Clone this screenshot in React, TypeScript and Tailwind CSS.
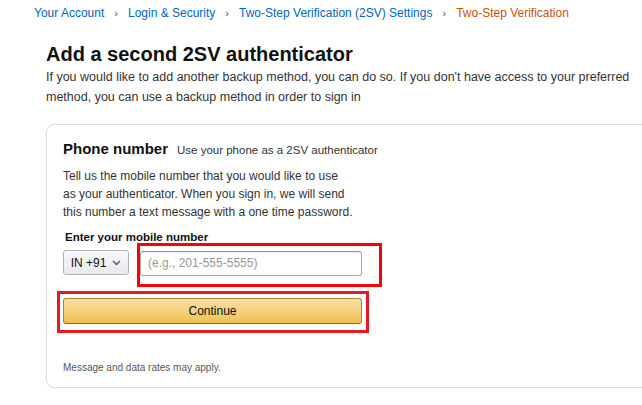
import React, { useState } from 'react';

const crumbs = [
  'Your Account',
  'Login & Security',
  'Two-Step Verification (2SV) Settings',
];

const App: React.FC = () => {
  const [phone, setPhone] = useState('');

  return (
    <div className="w-[642px] h-[405px] overflow-hidden bg-white font-['Liberation_Sans',Arial,sans-serif] text-[#111]">
      {/* breadcrumb */}
      <nav className="flex items-center pl-[34px] pt-[5px] text-[12px] leading-[16px]">
        {crumbs.map((c) => (
          <React.Fragment key={c}>
            <a className="text-[#0066c0] cursor-pointer">{c}</a>
            <span className="mx-[10px] text-[#555] text-[11px]">›</span>
          </React.Fragment>
        ))}
        <span className="text-[#c45500]">Two-Step Verification</span>
      </nav>

      <div className="pl-[46px]">
        <h1 className="mt-[20px] text-[20px] leading-[26px] font-bold">Add a second 2SV authenticator</h1>
        <p className="w-[590px] text-[12.5px] leading-[20px] text-[#333]">
          If you would like to add another backup method, you can do so. If you don't have access to your preferred
          method, you can use a backup method in order to sign in
        </p>

        <div className="mt-[17px] w-[620px] h-[264px] border border-[#ddd] rounded-[8px] pl-[16px] pt-[14px]">
          <div className="flex items-baseline">
            <h2 className="text-[15px] leading-[20px] font-bold">Phone number</h2>
            <span className="ml-[9px] text-[11.5px] text-[#333]">Use your phone as a 2SV authenticator</span>
          </div>

          <p className="mt-[8px] text-[12px] leading-[18px] text-[#333]">
            Tell us the mobile number that you would like to use
            <br />
            as your authenticator. When you sign in, we will send
            <br />
            this number a text message with a one time password.
          </p>

          <label className="block mt-[9px] ml-[2px] text-[11.5px] leading-[14px] font-bold">Enter your mobile number</label>

          <div className="flex mt-[6px]">
            <button className="flex items-center justify-center gap-[6px] w-[66px] h-[25px] rounded-[3px] border border-[#adb1b8] bg-gradient-to-b from-[#f7f8fa] to-[#e7e9ec] text-[12px] text-[#111] shadow-[0_1px_0_rgba(255,255,255,0.6)_inset]">
              IN +91
              <svg width="9" height="6" viewBox="0 0 9 6" fill="none">
                <path d="M1 1l3.5 3.5L8 1" stroke="#555" strokeWidth="1.4" />
              </svg>
            </button>

            <div className="relative ml-[11px]">
              <input
                value={phone}
                onChange={(e) => setPhone(e.target.value)}
                placeholder="(e.g., 201-555-5555)"
                className="w-[222px] h-[25px] px-[7px] rounded-[3px] border border-[#a6a6a6] border-t-[#949494] shadow-[0_1px_0_rgba(0,0,0,0.07)_inset] text-[12px] placeholder:text-[#999] outline-none"
              />
              <div className="absolute left-[-3px] top-[-7px] right-[-20px] bottom-[-11px] border-[3px] border-[#ff0000] pointer-events-none" />
            </div>
          </div>

          <div className="relative mt-[22px] w-[299px]">
            <button className="w-full h-[26px] rounded-[3px] border border-[#a88734] border-b-[#846a29] bg-gradient-to-b from-[#f7dfa5] to-[#f0c14b] text-[12px] text-[#111]">
              Continue
            </button>
            <div className="absolute left-[-6px] top-[-7px] right-[-7px] bottom-[-9px] border-[3px] border-[#e31b23] pointer-events-none" />
          </div>

          <p className="mt-[36px] text-[10px] text-[#555]">Message and data rates may apply.</p>
        </div>
      </div>
    </div>
  );
};

export default App;
